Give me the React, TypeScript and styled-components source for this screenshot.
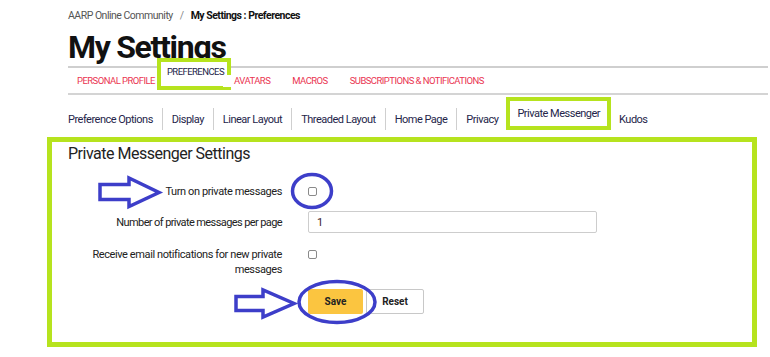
import styled, { createGlobalStyle } from 'styled-components';

const GlobalStyle = createGlobalStyle`
  body {
    margin: 0;
    background: #fff;
    font-family: Roboto, 'Liberation Sans', Arial, sans-serif;
    color: #222;
  }
`;

const LIME = '#b6e31e';
const ANNOT = '#3d3ec9';

const mainTabs = [
  { label: 'Personal Profile' },
  { label: 'Preferences', active: true },
  { label: 'Avatars' },
  { label: 'Macros' },
  { label: 'Subscriptions & Notifications' },
];

const subTabs = [
  { label: 'Preference Options' },
  { label: 'Display' },
  { label: 'Linear Layout' },
  { label: 'Threaded Layout' },
  { label: 'Home Page' },
  { label: 'Privacy' },
  { label: 'Private Messenger', active: true },
  { label: 'Kudos' },
];

function App() {
  return (
    <Page>
      <GlobalStyle />
      <Breadcrumb>
        <Crumb>AARP Online Community</Crumb>
        <Slash>/</Slash>
        <CurrentCrumb>My Settings : Preferences</CurrentCrumb>
      </Breadcrumb>
      <Title>My Settings</Title>
      <TabBar>
        {mainTabs.map(tab => (
          <Tab key={tab.label} active={tab.active}>
            {tab.label}
          </Tab>
        ))}
      </TabBar>
      <SubTabBar>
        {subTabs.map((tab, i) => (
          <SubTab
            key={tab.label}
            active={tab.active}
            divider={i > 0 && !tab.active && !subTabs[i - 1].active}
          >
            {tab.label}
          </SubTab>
        ))}
      </SubTabBar>
      <SettingsBox>
        <Heading>Private Messenger Settings</Heading>
        <Form>
          <Row top={16}>
            <Label>Turn on private messages</Label>
            <Control>
              <Check type="checkbox" />
            </Control>
          </Row>
          <Row top={9}>
            <Label tight>Number of private messages per page</Label>
            <Control>
              <TextInput readOnly defaultValue="1" />
            </Control>
          </Row>
          <Row top={14} alignTop>
            <Label indent>
              Receive email notifications for new private messages
            </Label>
            <Control>
              <Check type="checkbox" />
            </Control>
          </Row>
          <Buttons>
            <SaveButton>Save</SaveButton>
            <ResetButton>Reset</ResetButton>
          </Buttons>
        </Form>
      </SettingsBox>

      <Overlay width="770" height="357" viewBox="0 0 770 357">
        <path
          d="M100 184.5 L129 184.5 L129 178 L159 192.5 L129 206.5 L129 199.5 L100 199.5 Z"
          fill="none"
          stroke={ANNOT}
          strokeWidth="3.5"
        />
        <ellipse cx="312" cy="191" rx="19.5" ry="16.5" fill="none" stroke={ANNOT} strokeWidth="3.5" />
        <path
          d="M236 296.5 L263 296.5 L263 290 L294 303.5 L263 317 L263 310.5 L236 310.5 Z"
          fill="none"
          stroke={ANNOT}
          strokeWidth="3.5"
        />
        <ellipse cx="337" cy="302" rx="38" ry="20.5" fill="none" stroke={ANNOT} strokeWidth="3.5" />
      </Overlay>
    </Page>
  );
}

export default App;

const Page = styled.div`
  position: relative;
  width: 770px;
  height: 357px;
  overflow: hidden;
  padding-left: 68px;
  box-sizing: border-box;
`;

const Breadcrumb = styled.div`
  display: flex;
  align-items: center;
  gap: 7px;
  padding-top: 8px;
  height: 14px;
  font-size: 10.5px;
  letter-spacing: -0.5px;
`;

const Crumb = styled.span`
  color: #555;
`;

const Slash = styled.span`
  color: #888;
`;

const CurrentCrumb = styled.span`
  font-weight: 700;
  color: #111;
`;

const Title = styled.h1`
  margin: 9px 0 0;
  font-size: 32px;
  line-height: 32px;
  height: 32px;
  font-weight: 700;
  letter-spacing: -1.3px;
  color: #111;
`;

const TabBar = styled.div`
  display: flex;
  align-items: center;
  width: 700px;
  height: 25px;
  margin-top: 3px;
  border-top: 2px solid #cfcfcf;
  border-bottom: 2px solid #d4d4d4;
`;

type TabProps = {
  active?: boolean;
};

const Tab = styled.div<TabProps>`
  position: relative;
  z-index: 1;
  box-sizing: border-box;
  font-size: 9.5px;
  line-height: 12px;
  text-transform: uppercase;
  letter-spacing: -0.55px;
  white-space: nowrap;
  color: ${props => (props.active ? '#23234a' : '#ea3552')};
  padding: ${props => (props.active ? '4px 3px 0 6px' : '0 11px')};
  align-self: ${props => (props.active ? 'flex-start' : 'center')};
  margin: ${props => (props.active ? '-10px -8px 0 -9px' : '0')};
  height: ${props => (props.active ? '32px' : 'auto')};
  background: #fff;
  border: ${props => (props.active ? `4px solid ${LIME}` : 'none')};
  &:first-child {
    padding-left: 9px;
  }
`;

type SubTabProps = {
  active?: boolean;
  divider?: boolean;
};

const SubTabBar = styled.div`
  display: flex;
  align-items: flex-end;
  height: 22px;
  margin-top: 13px;
`;

const SubTab = styled.div<SubTabProps>`
  display: flex;
  align-items: center;
  box-sizing: border-box;
  font-size: 11px;
  letter-spacing: -0.5px;
  color: #25254a;
  white-space: nowrap;
  height: ${props => (props.active ? '33px' : '22px')};
  padding: ${props => (props.active ? '0 7px 1px' : '0 9px')};
  margin: ${props => (props.active ? '0 -1px 0 -1px' : '0')};
  border: ${props => (props.active ? `4px solid ${LIME}` : 'none')};
  border-left: ${props => (props.divider ? '1px solid #cfcfcf' : null)};
  &:first-child {
    padding-left: 0;
  }
`;

const SettingsBox = styled.section`
  box-sizing: border-box;
  width: 710px;
  height: 210px;
  margin: 7px 0 0 -21px;
  padding: 2px 16px 0 16px;
  border: 5px solid ${LIME};
`;

const Heading = styled.h2`
  margin: 0;
  font-size: 16px;
  line-height: 20px;
  font-weight: 400;
  letter-spacing: -0.5px;
  color: #222;
`;

const Form = styled.div`
  display: flex;
  flex-direction: column;
`;

type RowProps = {
  top: number;
  alignTop?: boolean;
};

const Row = styled.div<RowProps>`
  display: grid;
  grid-template-columns: 214px 289px;
  column-gap: 26px;
  align-items: ${props => (props.alignTop ? 'start' : 'center')};
  min-height: 22px;
  margin-top: ${props => props.top}px;
`;

type LabelProps = {
  indent?: boolean;
  tight?: boolean;
};

const Label = styled.div<LabelProps>`
  text-align: right;
  font-size: 11px;
  line-height: 15px;
  letter-spacing: ${props => (props.tight ? '-0.6px' : '-0.4px')};
  color: #222;
  padding-left: ${props => (props.indent ? '22px' : '0')};
`;

const Control = styled.div`
  display: flex;
  align-items: center;
  min-height: 15px;
`;

const Check = styled.input`
  appearance: none;
  margin: 0;
  width: 9px;
  height: 9px;
  border: 1px solid #8a8a8a;
  border-radius: 2px;
  background: #fff;
`;

const TextInput = styled.input`
  box-sizing: border-box;
  width: 289px;
  height: 22px;
  margin: 0;
  padding: 0 8px;
  border: 1px solid #cdcdcd;
  border-radius: 2px;
  font-family: Roboto, 'Liberation Sans', Arial, sans-serif;
  font-size: 11px;
  color: #3a1d2a;
  outline: none;
`;

const Buttons = styled.div`
  display: flex;
  gap: 3px;
  margin: 12px 0 0 240px;
`;

const SaveButton = styled.button`
  width: 55px;
  height: 25px;
  border: none;
  border-radius: 2px;
  background: #fbc540;
  font-family: Roboto, 'Liberation Sans', Arial, sans-serif;
  font-size: 10px;
  font-weight: 700;
  color: #222;
`;

const ResetButton = styled.button`
  width: 58px;
  height: 25px;
  border: 1px solid #c8c8c8;
  border-radius: 2px;
  background: #fff;
  font-family: Roboto, 'Liberation Sans', Arial, sans-serif;
  font-size: 10px;
  font-weight: 700;
  color: #222;
`;

const Overlay = styled.svg`
  position: absolute;
  left: 0;
  top: 0;
  pointer-events: none;
`;
